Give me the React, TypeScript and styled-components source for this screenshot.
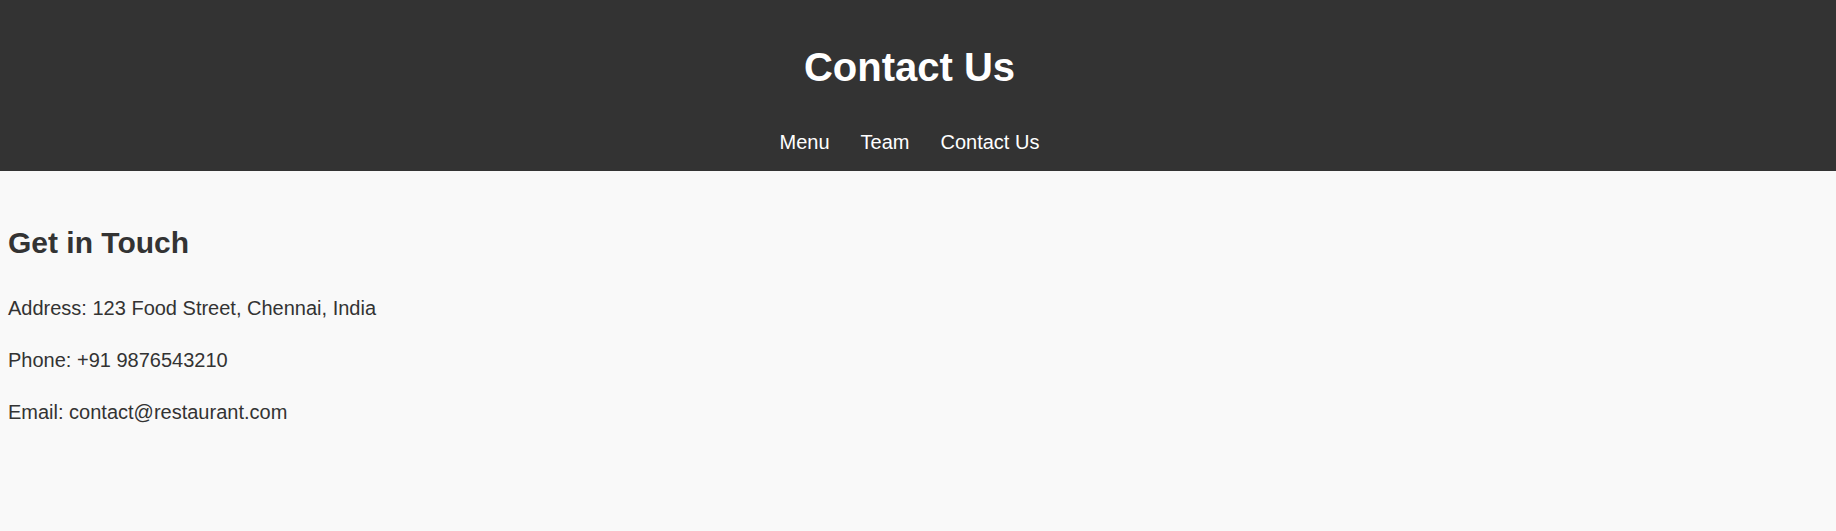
import styled, { createGlobalStyle } from "styled-components";

const GlobalStyle = createGlobalStyle`
    body {
        margin: 0;
        background: #f9f9f9;
        color: #333;
        font-family: "Liberation Sans", Arial, sans-serif;
        line-height: 1.6;
    }
`;

const Header = styled.header`
    background: #333;
    color: #fff;
    text-align: center;
    padding: 8px 17px 13px 0;
`;

const Title = styled.h1`
    font-size: 40px;
    font-weight: 700;
    margin: 27px 0;
`;

const Nav = styled.nav`
    display: flex;
    justify-content: center;
    gap: 31px;
`;

const NavLink = styled.a`
    color: #fff;
    text-decoration: none;
    font-size: 20px;
    line-height: 32px;
`;

const Section = styled.section`
    padding: 24px 8px;
`;

const Heading = styled.h2`
    font-size: 30px;
    font-weight: 700;
    margin: 24px 0 25px;
`;

const Line = styled.p`
    font-size: 20px;
    margin: 0 0 20px;
`;

const App: React.FC = () => {
    return (
        <>
            <GlobalStyle />
            <Header>
                <Title>Contact Us</Title>
                <Nav>
                    <NavLink href="#menu">Menu</NavLink>
                    <NavLink href="#team">Team</NavLink>
                    <NavLink href="#contact">Contact Us</NavLink>
                </Nav>
            </Header>
            <Section>
                <Heading>Get in Touch</Heading>
                <Line>Address: 123 Food Street, Chennai, India</Line>
                <Line>Phone: +91 9876543210</Line>
                <Line>Email: contact@restaurant.com</Line>
            </Section>
        </>
    );
};

export default App;
